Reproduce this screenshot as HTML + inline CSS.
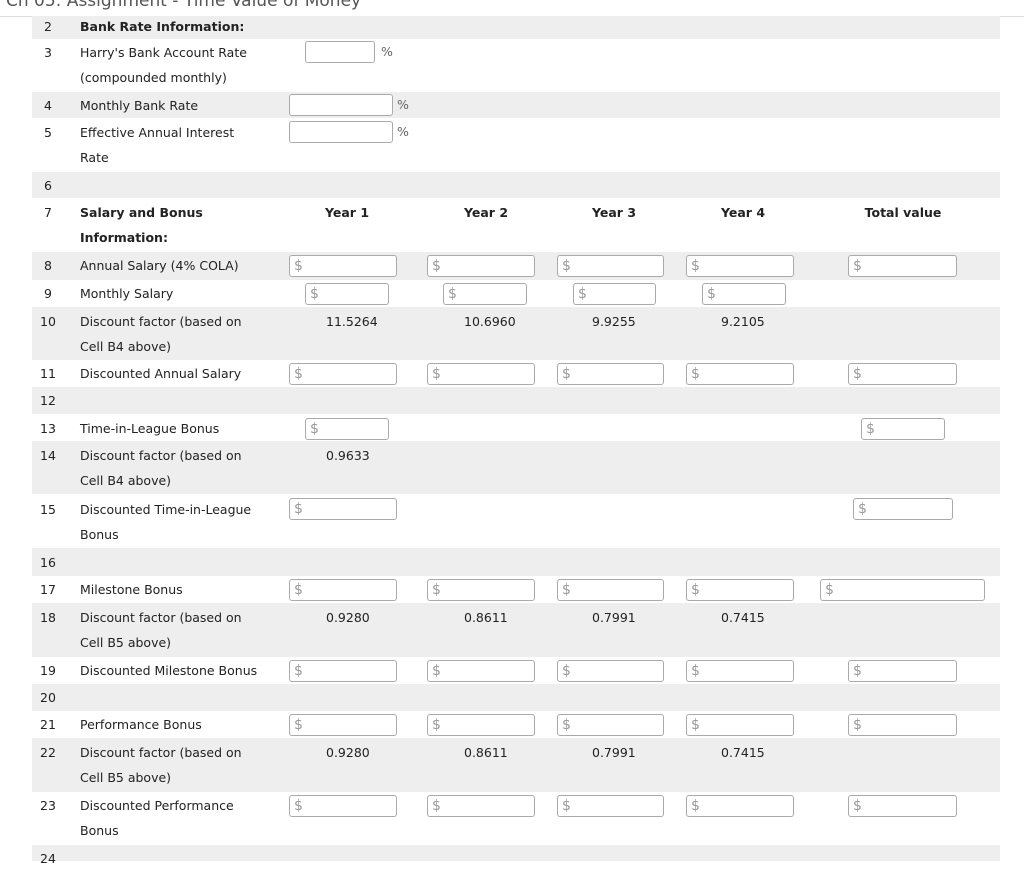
<!DOCTYPE html>
<html><head><meta charset="utf-8"><style>
body{margin:0;width:1024px;height:861px;overflow:hidden;background:#fff;font-family:"DejaVu Sans",Verdana,sans-serif;font-size:12.5px;color:#222;position:relative}
.t{position:absolute;left:0;top:-10px;width:1024px;height:26px;border-bottom:1px solid #ddd;font-size:17px;color:#555;line-height:22px;padding-left:6px}
.r{position:absolute;left:32px;width:968px}
.g{background:#eee}
.n{position:absolute;left:36px;width:24px;text-align:center;line-height:25px}
.l{position:absolute;left:80px;width:205px;line-height:25px}
.b{font-weight:bold}
.i{position:absolute;border:1px solid #aaa;border-radius:3px;background:#fff;color:#999;font-size:14px;line-height:20px;padding-left:4px;box-sizing:border-box;height:22px}
.p{position:absolute;color:#666;line-height:22px}
.v{position:absolute;line-height:25px}
.h{position:absolute;font-weight:bold;line-height:25px;text-align:center;width:120px}
</style></head><body>
<div class="t">Ch 05: Assignment - Time Value of Money</div>

<div class="r g" style="top:16px;height:23px"></div>
<div class="r g" style="top:92px;height:26px"></div>
<div class="r g" style="top:172px;height:26px"></div>
<div class="r g" style="top:252px;height:28px"></div>
<div class="r g" style="top:307px;height:53px"></div>
<div class="r g" style="top:387px;height:27px"></div>
<div class="r g" style="top:441px;height:53px"></div>
<div class="r g" style="top:548px;height:28px"></div>
<div class="r g" style="top:603px;height:54px"></div>
<div class="r g" style="top:684px;height:27px"></div>
<div class="r g" style="top:738px;height:54px"></div>
<div class="r g" style="top:845px;height:16px"></div>

<div class="n" style="top:14px">2</div><div class="l b" style="top:14px">Bank Rate Information:</div>
<div class="n" style="top:40px">3</div><div class="l" style="top:40px">Harry's Bank Account Rate<br>(compounded monthly)</div>
<div class="i" style="left:305px;top:41px;width:70px"></div><div class="p" style="left:381px;top:41px">%</div>
<div class="n" style="top:93px">4</div><div class="l" style="top:93px">Monthly Bank Rate</div>
<div class="i" style="left:289px;top:94px;width:104px"></div><div class="p" style="left:397px;top:94px">%</div>
<div class="n" style="top:120px">5</div><div class="l" style="top:120px">Effective Annual Interest<br>Rate</div>
<div class="i" style="left:289px;top:121px;width:104px"></div><div class="p" style="left:397px;top:121px">%</div>
<div class="n" style="top:173px">6</div>
<div class="n" style="top:200px">7</div><div class="l b" style="top:200px">Salary and Bonus<br>Information:</div>
<div class="h" style="left:287px;top:200px">Year 1</div>
<div class="h" style="left:426px;top:200px">Year 2</div>
<div class="h" style="left:554px;top:200px">Year 3</div>
<div class="h" style="left:683px;top:200px">Year 4</div>
<div class="h" style="left:843px;top:200px">Total value</div>

<div class="n" style="top:253px">8</div><div class="l" style="top:253px">Annual Salary (4% COLA)</div>
<div class="i" style="left:289px;top:255px;width:108px">$</div><div class="i" style="left:427px;top:255px;width:108px">$</div><div class="i" style="left:557px;top:255px;width:107px">$</div><div class="i" style="left:686px;top:255px;width:108px">$</div><div class="i" style="left:848px;top:255px;width:109px">$</div>
<div class="n" style="top:281px">9</div><div class="l" style="top:281px">Monthly Salary</div>
<div class="i" style="left:305px;top:283px;width:84px">$</div><div class="i" style="left:443px;top:283px;width:84px">$</div><div class="i" style="left:573px;top:283px;width:83px">$</div><div class="i" style="left:702px;top:283px;width:84px">$</div>
<div class="n" style="top:309px">10</div><div class="l" style="top:309px">Discount factor (based on<br>Cell B4 above)</div>
<div class="v" style="left:326px;top:309px">11.5264</div><div class="v" style="left:464px;top:309px">10.6960</div><div class="v" style="left:592px;top:309px">9.9255</div><div class="v" style="left:721px;top:309px">9.2105</div>
<div class="n" style="top:361px">11</div><div class="l" style="top:361px">Discounted Annual Salary</div>
<div class="i" style="left:289px;top:363px;width:108px">$</div><div class="i" style="left:427px;top:363px;width:108px">$</div><div class="i" style="left:557px;top:363px;width:107px">$</div><div class="i" style="left:686px;top:363px;width:108px">$</div><div class="i" style="left:848px;top:363px;width:109px">$</div>
<div class="n" style="top:388px">12</div>
<div class="n" style="top:416px">13</div><div class="l" style="top:416px">Time-in-League Bonus</div>
<div class="i" style="left:305px;top:418px;width:84px">$</div><div class="i" style="left:861px;top:418px;width:84px">$</div>
<div class="n" style="top:443px">14</div><div class="l" style="top:443px">Discount factor (based on<br>Cell B4 above)</div>
<div class="v" style="left:326px;top:443px">0.9633</div>
<div class="n" style="top:497px">15</div><div class="l" style="top:497px">Discounted Time-in-League<br>Bonus</div>
<div class="i" style="left:289px;top:498px;width:108px">$</div><div class="i" style="left:853px;top:498px;width:100px">$</div>
<div class="n" style="top:550px">16</div>
<div class="n" style="top:577px">17</div><div class="l" style="top:577px">Milestone Bonus</div>
<div class="i" style="left:289px;top:579px;width:108px">$</div><div class="i" style="left:427px;top:579px;width:108px">$</div><div class="i" style="left:557px;top:579px;width:107px">$</div><div class="i" style="left:686px;top:579px;width:108px">$</div><div class="i" style="left:820px;top:579px;width:165px">$</div>
<div class="n" style="top:605px">18</div><div class="l" style="top:605px">Discount factor (based on<br>Cell B5 above)</div>
<div class="v" style="left:326px;top:605px">0.9280</div><div class="v" style="left:464px;top:605px">0.8611</div><div class="v" style="left:592px;top:605px">0.7991</div><div class="v" style="left:721px;top:605px">0.7415</div>
<div class="n" style="top:658px">19</div><div class="l" style="top:658px">Discounted Milestone Bonus</div>
<div class="i" style="left:289px;top:660px;width:108px">$</div><div class="i" style="left:427px;top:660px;width:108px">$</div><div class="i" style="left:557px;top:660px;width:107px">$</div><div class="i" style="left:686px;top:660px;width:108px">$</div><div class="i" style="left:848px;top:660px;width:109px">$</div>
<div class="n" style="top:685px">20</div>
<div class="n" style="top:712px">21</div><div class="l" style="top:712px">Performance Bonus</div>
<div class="i" style="left:289px;top:714px;width:108px">$</div><div class="i" style="left:427px;top:714px;width:108px">$</div><div class="i" style="left:557px;top:714px;width:107px">$</div><div class="i" style="left:686px;top:714px;width:108px">$</div><div class="i" style="left:848px;top:714px;width:109px">$</div>
<div class="n" style="top:740px">22</div><div class="l" style="top:740px">Discount factor (based on<br>Cell B5 above)</div>
<div class="v" style="left:326px;top:740px">0.9280</div><div class="v" style="left:464px;top:740px">0.8611</div><div class="v" style="left:592px;top:740px">0.7991</div><div class="v" style="left:721px;top:740px">0.7415</div>
<div class="n" style="top:793px">23</div><div class="l" style="top:793px">Discounted Performance<br>Bonus</div>
<div class="i" style="left:289px;top:795px;width:108px">$</div><div class="i" style="left:427px;top:795px;width:108px">$</div><div class="i" style="left:557px;top:795px;width:107px">$</div><div class="i" style="left:686px;top:795px;width:108px">$</div><div class="i" style="left:848px;top:795px;width:109px">$</div>
<div class="n" style="top:846px">24</div>
</body></html>
